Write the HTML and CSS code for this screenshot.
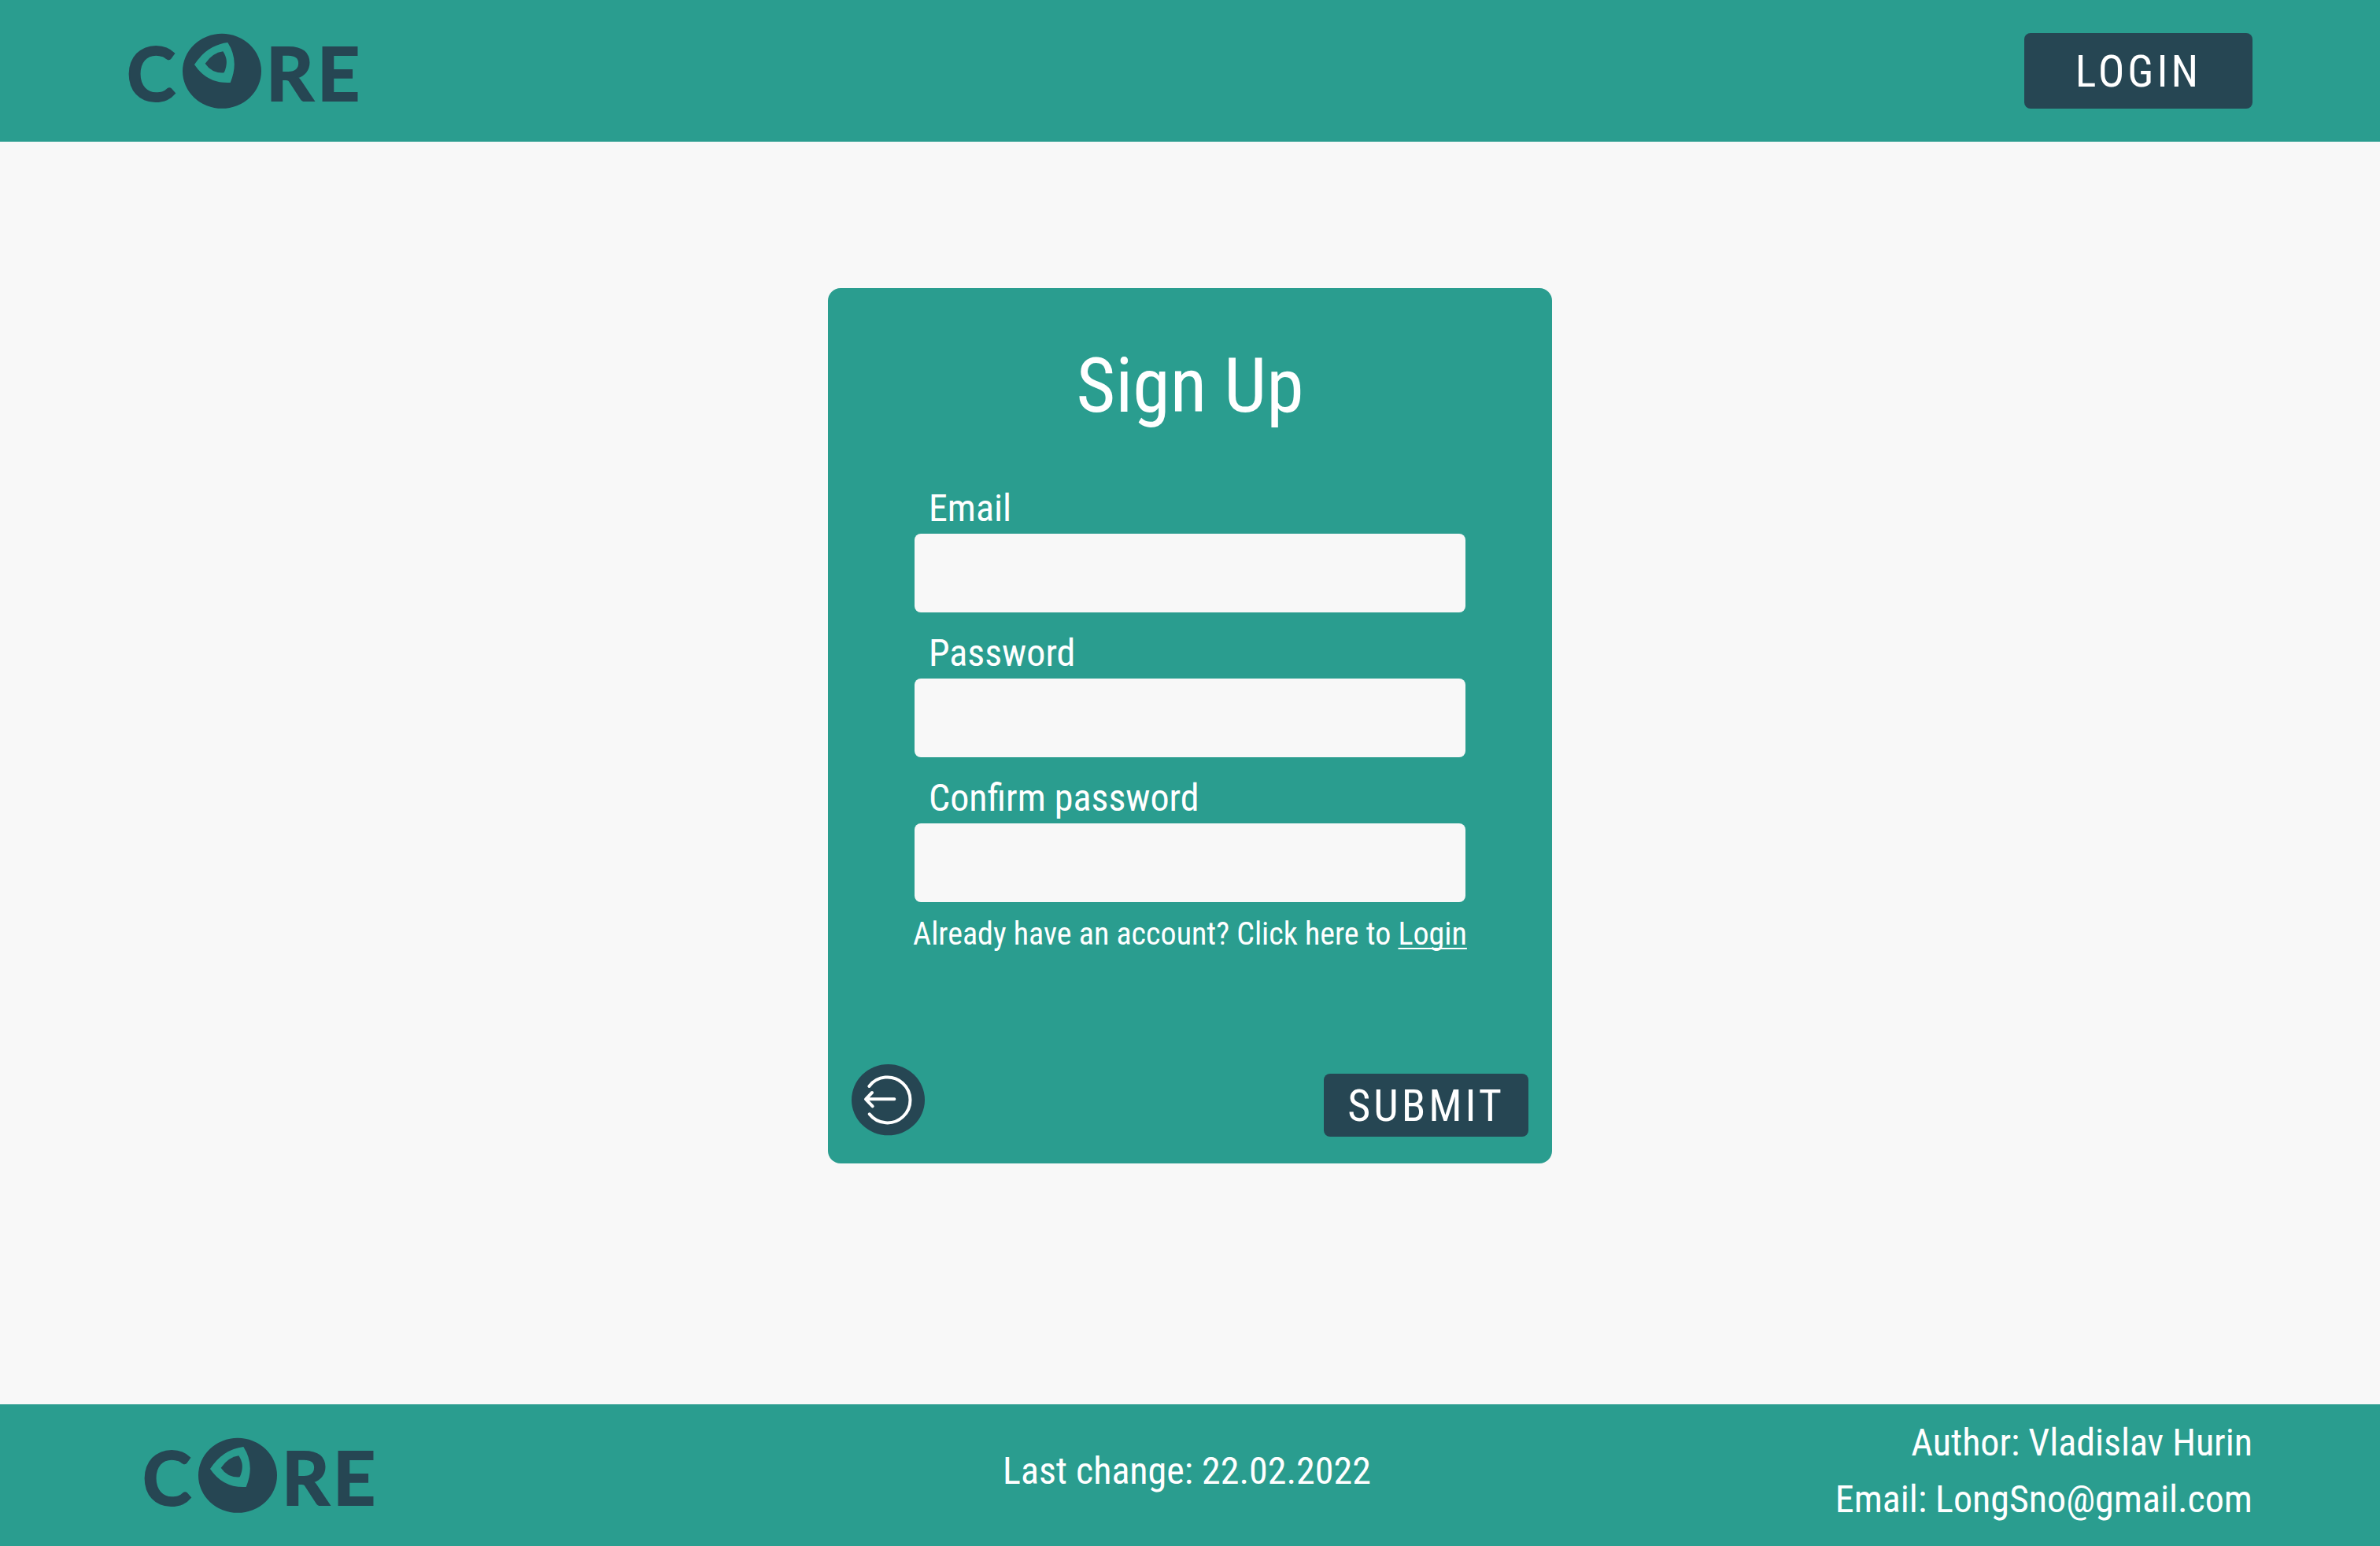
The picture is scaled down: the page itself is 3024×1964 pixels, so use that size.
FILE: index.html
```html
<!DOCTYPE html>
<html lang="en">
<head>
  <meta charset="utf-8">
  <meta name="viewport" content="width=device-width, initial-scale=1">
  <title>Core – Sign Up</title>
  <link rel="stylesheet" href="styles.css">
</head>
<body>
  <header class="bar header">
    <a class="logo-link" href="#" aria-label="Core">
      <svg class="logo" viewBox="0 0 294 96">
        <text class="logo-letter" x="-3" y="86">C</text>
        <g transform="scale(.33333) translate(-72 -66)">
          <path fill-rule="evenodd" d="M276 211A150 142.500 0 1 1 576 211A150 142.500 0 1 1 276 211ZM321 186Q369 112 448 102Q493 172 458 255Q370 260 321 186Z"/>
          <path d="M362 182Q391 141 430 136Q455 172 434 217Q388 220 362 182Z"/>
        </g>
        <text class="logo-letter" x="174" y="86">R</text>
        <text class="logo-letter" x="239" y="86">E</text>
      </svg>
    </a>
    <button class="button button-login" type="button">LOGIN</button>
  </header>

  <main class="main">
    <form class="card">
      <h1 class="title">Sign Up</h1>
      <div class="fields">
        <div class="field">
          <label class="label" for="email">Email</label>
          <input class="input" id="email" type="email">
        </div>
        <div class="field">
          <label class="label" for="password">Password</label>
          <input class="input" id="password" type="password">
        </div>
        <div class="field">
          <label class="label" for="confirm">Confirm password</label>
          <input class="input" id="confirm" type="password">
        </div>
      </div>
      <p class="hint">Already have an account? Click here to <a class="hint-link" href="#">Login</a></p>
      <div class="actions">
        <button class="back" type="button" aria-label="Back">
          <svg class="back-icon" viewBox="126 96 279 276">
            <ellipse class="back-disc" cx="265.500" cy="231.500" rx="139.500" ry="135.500"/>
            <path class="back-line" d="M193 180A87 87 0 1 1 194 286M289 229H182M204 204L180 229L206 256"/>
          </svg>
        </button>
        <button class="button button-submit" type="submit">SUBMIT</button>
      </div>
    </form>
  </main>

  <footer class="bar footer">
    <a class="logo-link footer-logo" href="#" aria-label="Core">
      <svg class="logo" viewBox="0 0 294 96">
        <text class="logo-letter" x="-3" y="86">C</text>
        <g transform="scale(.33333) translate(-72 -66)">
          <path fill-rule="evenodd" d="M276 211A150 142.500 0 1 1 576 211A150 142.500 0 1 1 276 211ZM321 186Q369 112 448 102Q493 172 458 255Q370 260 321 186Z"/>
          <path d="M362 182Q391 141 430 136Q455 172 434 217Q388 220 362 182Z"/>
        </g>
        <text class="logo-letter" x="174" y="86">R</text>
        <text class="logo-letter" x="239" y="86">E</text>
      </svg>
    </a>
    <p class="footer-text">Last change: 22.02.2022</p>
    <address class="footer-text contact">Author: Vladislav Hurin<br>Email: LongSno@gmail.com</address>
  </footer>
</body>
</html>
```

FILE: styles.css
```css
:root {
  --teal: #2a9d8f;
  --navy: #264653;
  --paper: #f8f8f8;
}

* {
  box-sizing: border-box;
}

body {
  display: flex;
  flex-direction: column;
  min-height: 100vh;
  margin: 0;
  background: var(--paper);
  color: #fff;
  font-family: "Roboto Condensed", Roboto, sans-serif;
  font-size: 48px;
  line-height: 56px;
}

.bar {
  min-height: 180px;
  background: var(--teal);
}

.header {
  display: flex;
  align-items: center;
  justify-content: space-between;
  padding: 0 162px 0 164px;
}

.logo-link {
  display: block;
}

.logo {
  display: block;
  width: 294px;
  height: 96px;
  overflow: visible;
  fill: var(--navy);
}

.logo-letter {
  font-family: Lato, sans-serif;
  font-size: 94px;
  font-weight: 700;
  stroke: var(--navy);
  stroke-width: 2px;
}

.button {
  padding: 2px 0 0;
  border: 0;
  border-radius: 8px;
  background: var(--navy);
  color: #fff;
  font: inherit;
  font-size: 56px;
  letter-spacing: 4px;
  cursor: pointer;
}

.button-login {
  width: 290px;
  height: 96px;
}

.button-submit {
  width: 260px;
  height: 80px;
}

.main {
  flex: 1;
  padding: 186px 24px 64px;
}

.card {
  display: flex;
  flex-direction: column;
  max-width: 920px;
  min-height: 1112px;
  margin: 0 auto;
  padding: 68px 30px 34px;
  border-radius: 16px;
  background: var(--teal);
}

.title {
  margin: 0 0 72px;
  font-size: 96px;
  font-weight: 400;
  line-height: 112px;
  text-align: center;
}

.fields {
  display: grid;
  gap: 24px;
  padding: 0 80px;
}

.field {
  display: grid;
  gap: 4px;
}

.label {
  padding-left: 18px;
}

.input {
  width: 100%;
  height: 100px;
  padding: 0 18px;
  border: 0;
  border-radius: 8px;
  background: var(--paper);
  color: var(--navy);
  font: inherit;
}

.hint {
  margin: 17px 0 0;
  font-size: 40px;
  line-height: 48px;
  text-align: center;
}

.hint-link {
  color: inherit;
  text-decoration-thickness: 2px;
  text-decoration-skip-ink: none;
  text-underline-offset: 4px;
}

.actions {
  display: flex;
  align-items: flex-end;
  justify-content: space-between;
  margin-top: auto;
}

.back {
  padding: 0;
  border: 0;
  background: none;
  cursor: pointer;
}

.back-icon {
  display: block;
  width: 93px;
  height: 92px;
}

.back-disc {
  fill: var(--navy);
}

.back-line {
  fill: none;
  stroke: #fff;
  stroke-width: 12;
  stroke-linecap: round;
  stroke-linejoin: round;
}

.footer {
  display: grid;
  grid-template-columns: 1fr auto 1fr;
  align-items: center;
  padding: 0 162px 0 154px;
}

.footer-logo {
  padding-left: 30px;
}

.footer-text {
  margin: 0;
  padding-bottom: 10px;
}

.contact {
  font-style: normal;
  line-height: 72px;
  text-align: right;
}
```
